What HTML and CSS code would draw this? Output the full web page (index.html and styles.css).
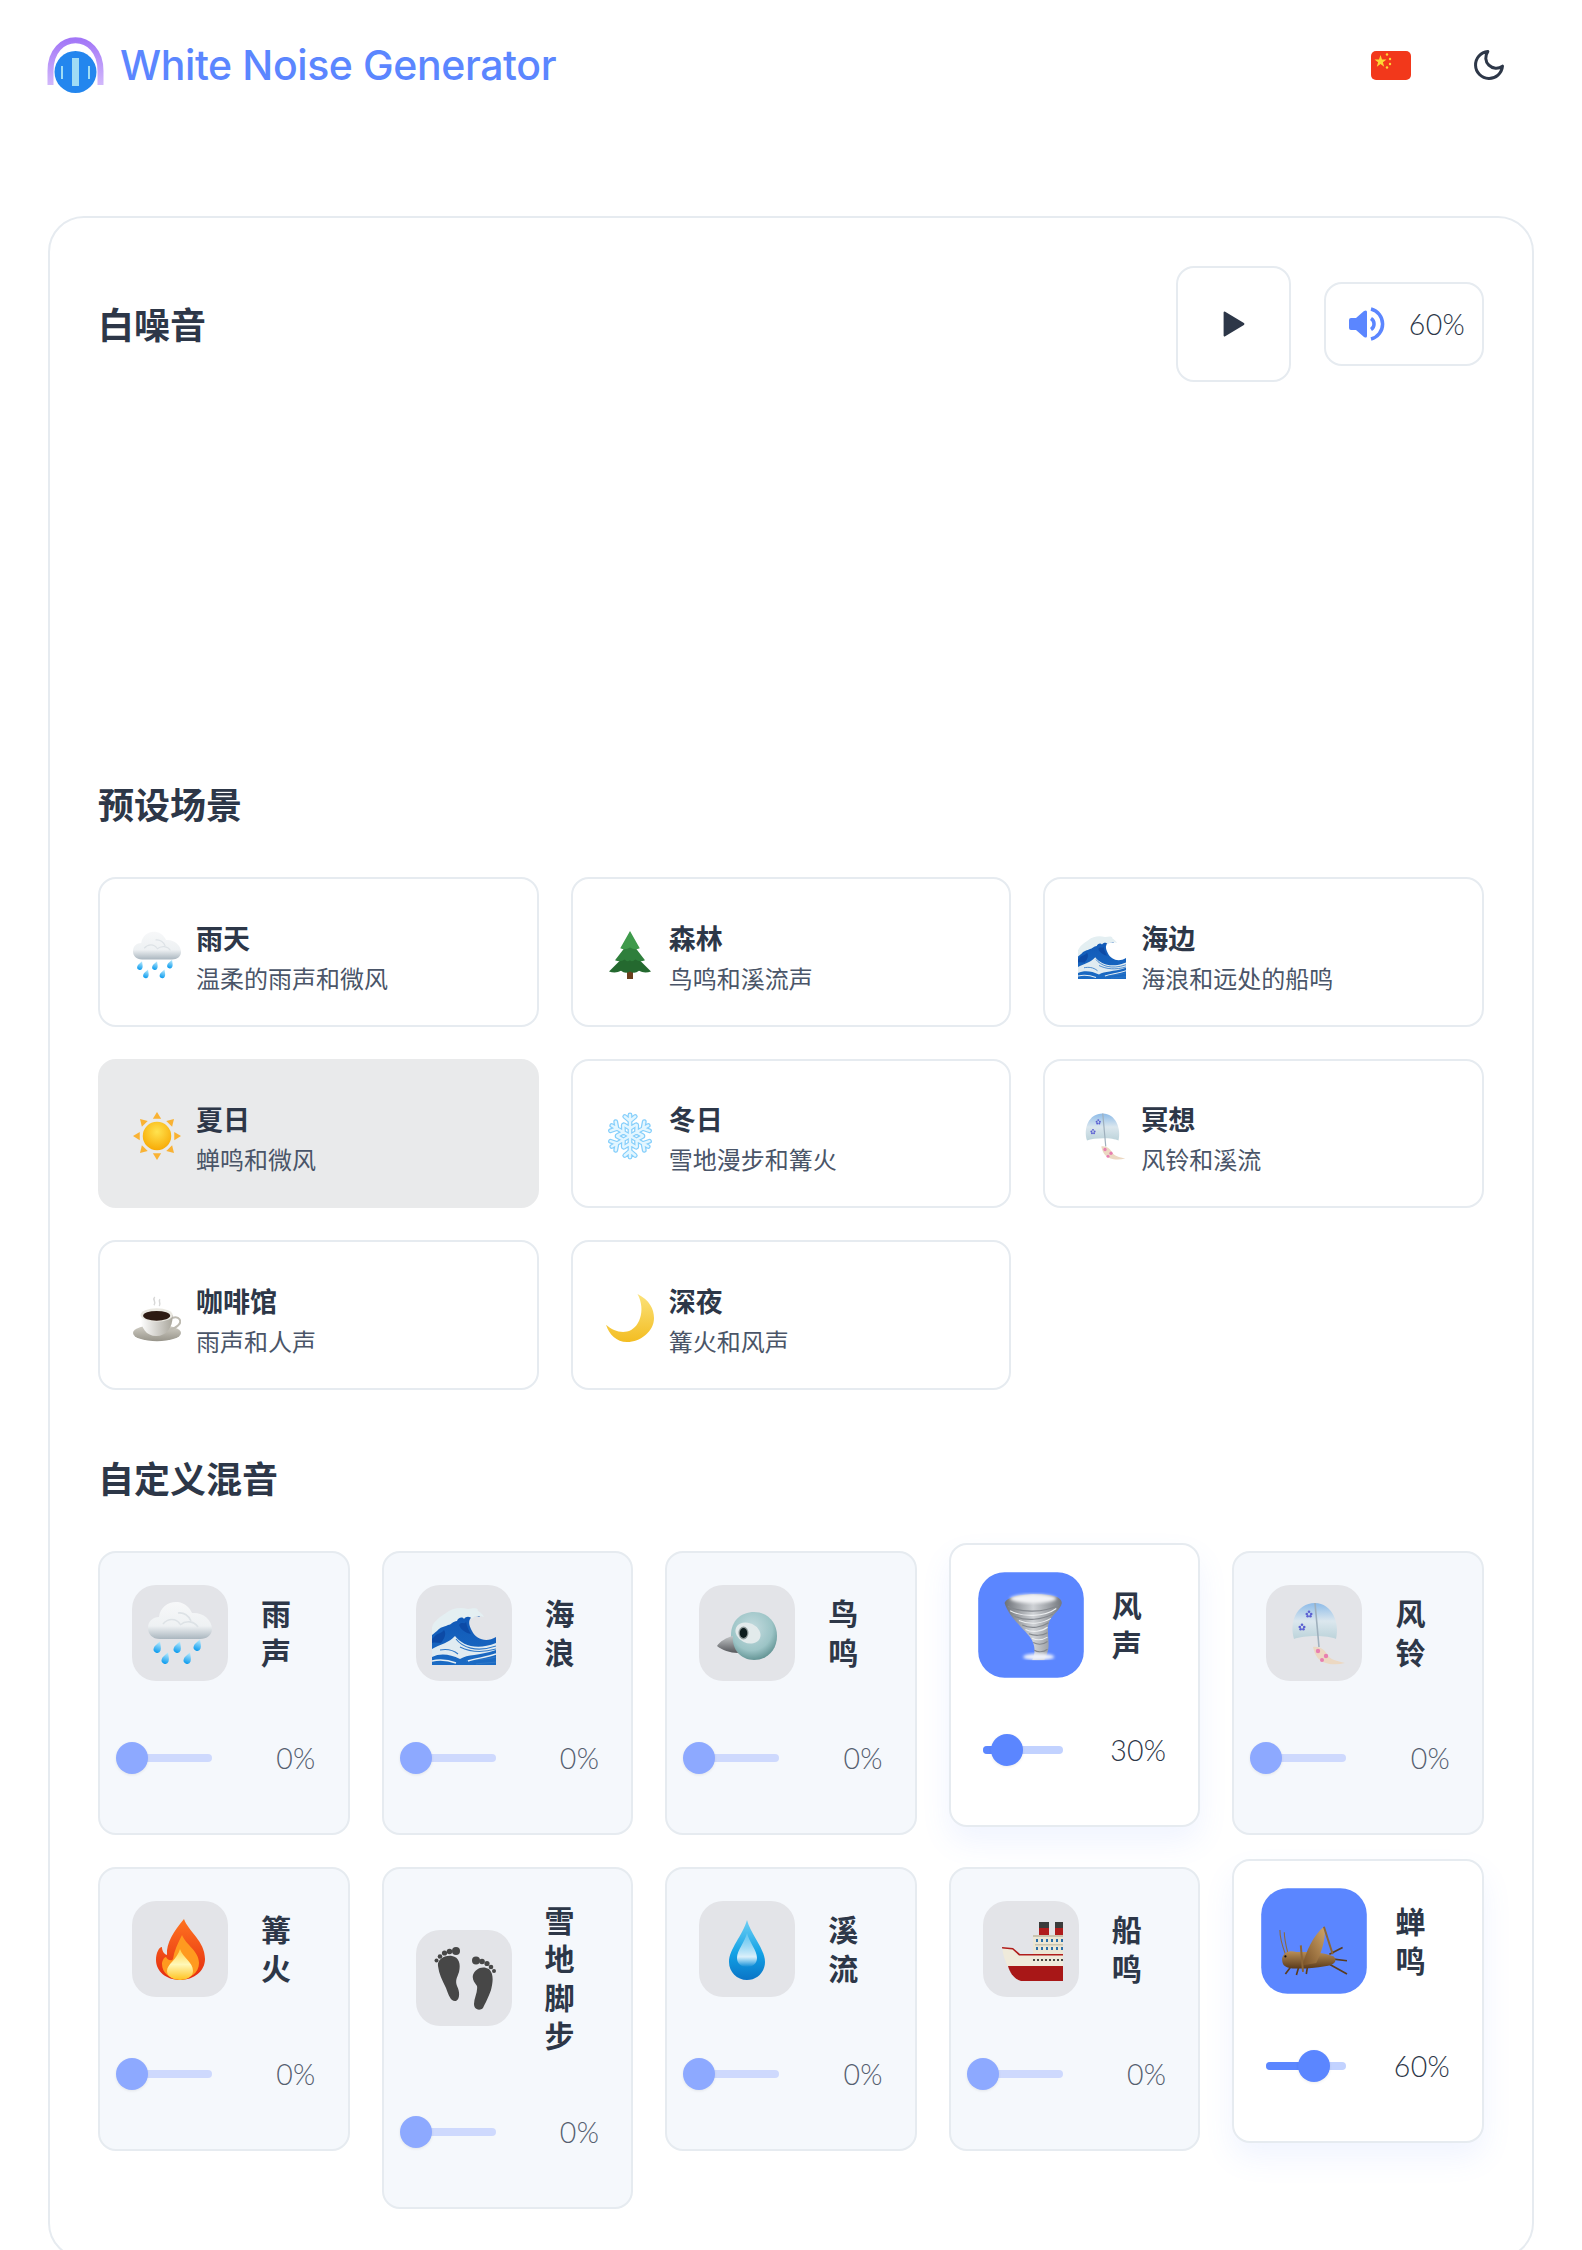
FILE: index.html
```html
<!DOCTYPE html>
<html lang="zh-CN">
<head>
    <meta charset="UTF-8">
    <meta name="viewport" content="width=device-width, initial-scale=1.0">
    <title>White Noise Generator</title>
    <link rel="stylesheet" href="styles.css">
</head>
<body>
    <!-- emoji drawings, reused by presets and sound cards -->
    <svg class="sprite" xmlns="http://www.w3.org/2000/svg">
        <defs>
            <linearGradient id="gCloud" x1="0" y1="0" x2="0" y2="1"><stop offset="0" stop-color="#f7f8f9"/><stop offset=".65" stop-color="#eef1f3"/><stop offset="1" stop-color="#aab6bf"/></linearGradient>
            <linearGradient id="gRain" x1="0" y1="0" x2="0" y2="1"><stop offset="0" stop-color="#bfeeff"/><stop offset="1" stop-color="#0b9bee"/></linearGradient>
            <linearGradient id="gWave" x1="0" y1="0" x2="0" y2="1"><stop offset="0" stop-color="#0f56b5"/><stop offset="1" stop-color="#1b6bc4"/></linearGradient>
            <radialGradient id="gSun" cx=".5" cy=".35" r=".7"><stop offset="0" stop-color="#ffe34f"/><stop offset="1" stop-color="#f7a600"/></radialGradient>
            <linearGradient id="gBell" x1="0" y1="0" x2="0" y2="1"><stop offset="0" stop-color="#8dbbe8"/><stop offset=".5" stop-color="#dbe7ee"/><stop offset="1" stop-color="#bcd3da"/></linearGradient>
            <linearGradient id="gCup" x1="0" y1="0" x2="1" y2="0"><stop offset="0" stop-color="#ffffff"/><stop offset="1" stop-color="#a9a69c"/></linearGradient>
            <linearGradient id="gSaucer" x1="0" y1="0" x2="0" y2="1"><stop offset="0" stop-color="#d4d1c8"/><stop offset="1" stop-color="#97948a"/></linearGradient>
            <linearGradient id="gMoon" x1="0" y1="0" x2="0" y2="1"><stop offset="0" stop-color="#fbe27a"/><stop offset="1" stop-color="#f3bd22"/></linearGradient>
            <radialGradient id="gBird" cx=".45" cy=".35" r=".75"><stop offset="0" stop-color="#c5dce0"/><stop offset=".6" stop-color="#9cc4c6"/><stop offset="1" stop-color="#4b7f7f"/></radialGradient>
            <linearGradient id="gBeak" x1="0" y1="0" x2="0" y2="1"><stop offset="0" stop-color="#c3c6c8"/><stop offset="1" stop-color="#54565a"/></linearGradient>
            <linearGradient id="gTwister" x1="0" y1="0" x2="1" y2="0"><stop offset="0" stop-color="#6d7177"/><stop offset=".5" stop-color="#cfd2d6"/><stop offset="1" stop-color="#74787e"/></linearGradient>
            <linearGradient id="gFlame" x1="0" y1="0" x2="0" y2="1"><stop offset="0" stop-color="#ff7420"/><stop offset="1" stop-color="#e42a10"/></linearGradient>
            <linearGradient id="gFlameIn" x1="0" y1="0" x2="0" y2="1"><stop offset="0" stop-color="#ffd24a"/><stop offset=".5" stop-color="#fff8b8"/><stop offset="1" stop-color="#ffc21f"/></linearGradient>
            <linearGradient id="gDrop" x1="0" y1="0" x2="0" y2="1"><stop offset="0" stop-color="#6fcff3"/><stop offset=".55" stop-color="#12a2e6"/><stop offset="1" stop-color="#0a74c6"/></linearGradient>
            <linearGradient id="gShine" x1="0" y1="0" x2="0" y2="1"><stop offset="0" stop-color="#ffffff" stop-opacity=".15"/><stop offset=".7" stop-color="#ffffff" stop-opacity=".85"/><stop offset="1" stop-color="#ffffff" stop-opacity="0"/></linearGradient>
            <linearGradient id="gCricket" x1="0" y1="0" x2="0" y2="1"><stop offset="0" stop-color="#b98f58"/><stop offset="1" stop-color="#5a3a1b"/></linearGradient>
            <linearGradient id="gThigh" x1="1" y1="0" x2="0" y2="1"><stop offset="0" stop-color="#d0a568"/><stop offset="1" stop-color="#7a5228"/></linearGradient>
            <linearGradient id="gLogo" x1="0" y1="0" x2="0" y2="1"><stop offset="0" stop-color="#a377f7"/><stop offset="1" stop-color="#d2b8fb"/></linearGradient>
            <filter id="soft" x="-20%" y="-20%" width="140%" height="140%"><feGaussianBlur stdDeviation="1.500"/></filter>
            <path id="rainDrop" d="M0-6C2-2 3.6 0 3.6 2.4A3.6 3.6 0 0 1-3.6 2.4C-3.6 0-2-2 0-6Z" fill="url(#gRain)"/>
            <path id="flakeArm" d="M32 32V4M32 12l-7-6M32 12l7-6M32 22l-8-5M32 22l8-5"/>
            <g id="flake">
                <use href="#flakeArm"/>
                <use href="#flakeArm" transform="rotate(60 32 32)"/>
                <use href="#flakeArm" transform="rotate(120 32 32)"/>
                <use href="#flakeArm" transform="rotate(180 32 32)"/>
                <use href="#flakeArm" transform="rotate(240 32 32)"/>
                <use href="#flakeArm" transform="rotate(300 32 32)"/>
            </g>
            <path id="sunRay" d="M32 0l5.500 9H26.500Z" fill="#f9b233"/>
            <g id="petal" fill="#5b60d2"><circle cx="0" cy="-2.200" r="1.300"/><circle cx="2.200" cy="0" r="1.300"/><circle cx="-2.200" cy="0" r="1.300"/><circle cx="1.400" cy="2.200" r="1.300"/><circle cx="-1.400" cy="2.200" r="1.300"/></g>
        </defs>

        <symbol id="e-rain" viewBox="0 0 64 64">
            <path d="M12 38C4 38 0 33 0 27C0 20 5 16 11 16C12 6 21 0 30 1C37 2 42 7 44 12C54 11 64 18 64 28C64 34 59 38 52 38Z" fill="url(#gCloud)"/>
            <path d="M15 23C20 17 28 17 32 23M30 12C36 11 41 15 43 20M32 24C38 19 46 20 50 26" fill="none" stroke="#dde2e6" stroke-width="1.600"/>
            <use href="#rainDrop" transform="translate(10 46) rotate(20)"/>
            <use href="#rainDrop" transform="translate(18 57) rotate(20)"/>
            <use href="#rainDrop" transform="translate(30 46) rotate(20)"/>
            <use href="#rainDrop" transform="translate(40 57) rotate(20)"/>
            <use href="#rainDrop" transform="translate(50 44) rotate(20)"/>
        </symbol>

        <symbol id="e-tree" viewBox="0 0 64 64">
            <rect x="28" y="53" width="8" height="11" fill="#6b3f1d"/>
            <path d="M32 26L60 54Q51 57 44 53Q38 58 32 54Q26 58 20 53Q13 57 4 54Z" fill="#24692f"/>
            <path d="M32 13L52 39Q45 42 39 38Q35 42 32 39Q28 42 25 38Q19 42 12 39Z" fill="#2f7f3c"/>
            <path d="M32 0L45 23Q38 26 32 22Q26 26 19 23Z" fill="#3f9a4b"/>
        </symbol>

        <symbol id="e-wave" viewBox="0 0 64 64">
            <path d="M0 64V28C2 22 8 18 14 14C20 10 28 8 36 10C40 11 46 12 48 16C44 14 40 15 38 18C36 22 38 26 40 30C44 38 54 42 64 36V64Z" fill="url(#gWave)"/>
            <path d="M0 26C2 20 8 16 14 12C20 7 28 6 36 8C40 8 44 6 46 9C44 10 50 11 52 16C47 14 42 15 40 18C38 15 34 15 32 18C30 15 26 17 25 20C21 20 19 24 16 24C12 26 8 26 5 30C3 31 2 33 0 34Z" fill="#e4eff2"/>
            <path d="M27 24C30 20 32 24 34 21C35 26 37 30 39 33C34 32 29 29 27 24ZM2 36C5 32 9 33 12 29C15 33 12 38 9 42C6 42 3 41 0 42V38Z" fill="#0c4aa6"/>
            <path d="M0 48C9 43 17 42 23 35C30 44 44 50 64 42V49C46 55 36 53 28 58C18 53 8 52 0 56Z" fill="#e0ebf1"/>
            <path d="M24 38C30 46 44 52 64 45M28 46C38 51 50 52 64 48M8 49C14 48 20 48 26 53M34 60C44 58 54 59 64 56M44 63C50 62 58 62 64 61" fill="none" stroke="#2f78c8" stroke-width="1.100"/>
            <path d="M36 60C44 57 54 57 64 53M0 60C8 58 16 59 24 62" fill="none" stroke="#e6eff4" stroke-width="1.400"/>
        </symbol>

        <symbol id="e-sun" viewBox="0 0 64 64">
            <use href="#sunRay"/>
            <use href="#sunRay" transform="rotate(45 32 32)"/>
            <use href="#sunRay" transform="rotate(90 32 32)"/>
            <use href="#sunRay" transform="rotate(135 32 32)"/>
            <use href="#sunRay" transform="rotate(180 32 32)"/>
            <use href="#sunRay" transform="rotate(225 32 32)"/>
            <use href="#sunRay" transform="rotate(270 32 32)"/>
            <use href="#sunRay" transform="rotate(315 32 32)"/>
            <circle cx="32" cy="32" r="19" fill="url(#gSun)"/>
        </symbol>

        <symbol id="e-snow" viewBox="0 0 64 64">
            <use href="#flake" fill="none" stroke="#86cffb" stroke-width="6.500" stroke-linecap="round"/>
            <use href="#flake" fill="none" stroke="#e3f6ff" stroke-width="3.200" stroke-linecap="round"/>
        </symbol>

        <symbol id="e-chime" viewBox="0 0 64 64">
            <path d="M12 38C7 22 14 2 33 2C50 2 58 22 54 38C46 34 22 34 12 38Z" fill="url(#gBell)"/>
            <path d="M33 2L37 46" stroke="#9fb0bd" stroke-width="1.600"/>
            <use href="#petal" transform="translate(27 13)"/>
            <use href="#petal" transform="translate(20 26)"/>
            <path d="M31 46C37 45 42 48 45 53C48 59 55 60 63 62C52 65 40 63 35 56C33 53 32 50 31 46Z" fill="#ecd8c2"/>
            <circle cx="36" cy="50" r="2.200" fill="#e87fb0"/>
            <circle cx="44" cy="55" r="2.200" fill="#e87fb0"/>
            <circle cx="40" cy="59" r="2" fill="#e87fb0"/>
        </symbol>

        <symbol id="e-coffee" viewBox="0 0 64 64">
            <path d="M29 4C25 8 32 10 28 15M36 7C33 10 38 12 35 16" fill="none" stroke="#d8d8d8" stroke-width="2"/>
            <ellipse cx="32" cy="52" rx="32" ry="11" fill="url(#gSaucer)"/>
            <path d="M52 32C62 28 66 37 60 42C57 45 52 47 48 48" fill="none" stroke="#bdbab1" stroke-width="2.600"/>
            <path d="M10 28C10 46 18 56 31 56C44 56 53 46 53 28Z" fill="url(#gCup)"/>
            <ellipse cx="31.500" cy="28" rx="21.500" ry="9" fill="#e9e7e0"/>
            <ellipse cx="31.500" cy="29" rx="18" ry="6.500" fill="#2d1a12"/>
        </symbol>

        <symbol id="e-moon" viewBox="0 0 64 64">
            <path d="M42 0C58 8 64 20 64 32C64 50 46 64 28 64C14 64 4 54 0 41C8 48 18 52 28 50C44 47 54 22 42 0Z" fill="url(#gMoon)"/>
        </symbol>

        <symbol id="e-bird" viewBox="0 0 64 64">
            <path d="M16 34C16 20 26 11 39 11C53 11 62 22 62 35C62 49 52 59 39 59C26 59 16 48 16 34Z" fill="url(#gBird)"/>
            <ellipse cx="33" cy="32" rx="13" ry="10" fill="#e2eaeb" transform="rotate(25 33 32)"/>
            <ellipse cx="28.500" cy="32" rx="5" ry="6.500" fill="#8f9a9a"/>
            <ellipse cx="28.500" cy="32" rx="3.800" ry="5" fill="#0d1c1d"/>
            <path d="M2 45C4 41 12 36 18 35C17 40 19 47 23 52C15 52 7 49 2 45Z" fill="url(#gBeak)"/>
        </symbol>

        <symbol id="e-twister" viewBox="0 0 64 64">
            <path d="M8 12C10 6 24 4 36 4C50 4 60 6 60 12C59 18 52 22 49 28C46 34 48 42 48 50C48 56 46 60 44 64H33C36 58 36 52 33 46C29 38 12 26 8 12Z" fill="url(#gTwister)"/>
            <ellipse cx="34" cy="8" rx="21" ry="4" fill="#f2f3f5" filter="url(#soft)"/>
            <path d="M11 15C22 21 44 21 57 14M17 24C28 29 42 27 52 22M24 32C32 36 42 34 48 30M30 40C35 42 42 42 47 39M34 48C38 50 43 50 47 47M35 55C38 57 43 57 47 54" fill="none" stroke="#84888e" stroke-width="1"/>
            <path d="M13 19C24 25 44 25 55 17M21 28C30 32 42 31 50 26M27 36C33 39 42 38 47 34M33 44C37 46 42 46 47 43" fill="none" stroke="#eceef0" stroke-width="1"/>
            <ellipse cx="39" cy="61" rx="14" ry="3" fill="#eef1fb" filter="url(#soft)"/>
        </symbol>

        <symbol id="e-fire" viewBox="0 0 64 64">
            <path d="M36 2C40 14 57 24 57 42C57 54 46 63 32 63C18 63 8 54 8 43C8 36 11 30 14 30C14 34 16 37 19 38C18 26 26 14 36 2Z" fill="url(#gFlame)"/>
            <path d="M34 18C38 28 51 34 51 46C51 56 42 62 32 62C22 62 14 56 14 47C14 44 16 40 18 40C20 44 24 44 25 42C26 34 30 26 34 18Z" fill="#ff9a1f"/>
            <path d="M32 32C35 41 45 45 45 54C45 60 38 63 32 63C26 63 19 60 19 54C19 47 29 43 32 32Z" fill="url(#gFlameIn)"/>
        </symbol>

        <symbol id="e-feet" viewBox="0 0 64 64">
            <g fill="#474747">
                <path d="M6 20C5 14 12 9 20 10C27 11 29 18 27 26C25 32 23 34 25 40C28 46 28 53 24 55C19 56 17 50 14 42C10 34 7 28 6 20Z"/>
                <circle cx="24" cy="5" r="4"/><circle cx="17.500" cy="5.500" r="2.800"/><circle cx="12.500" cy="7" r="2.600"/><circle cx="8" cy="10.500" r="2.300"/><circle cx="4.500" cy="14.500" r="2"/>
                <path d="M41 29C43 23 50 19 57 23C62 28 61 36 59 44C57 50 53 58 51 62C48 65 42 64 42 58C42 52 46 46 45 40C42 36 40 33 41 29Z"/>
                <circle cx="44" cy="14.500" r="4"/><circle cx="50" cy="15.500" r="2.800"/><circle cx="55" cy="17.500" r="2.600"/><circle cx="59" cy="21" r="2.300"/><circle cx="62" cy="25" r="2"/>
            </g>
        </symbol>

        <symbol id="e-drop" viewBox="0 0 64 64">
            <path d="M32 3C36 18 50 32 50 45C50 55 42 63 32 63C22 63 14 55 14 45C14 32 28 18 32 3Z" fill="url(#gDrop)"/>
            <path d="M32 16C34 25 42 33 42 41C42 47 37 50 32 50C27 50 22 47 22 41C22 33 30 25 32 16Z" fill="url(#gShine)"/>
        </symbol>

        <symbol id="e-ship" viewBox="0 0 64 64">
            <rect x="40" y="5" width="10" height="15" fill="#b01c1c"/>
            <rect x="40" y="5" width="10" height="6" fill="#3b3b3b"/>
            <rect x="56" y="5" width="8" height="15" fill="#b01c1c"/>
            <rect x="56" y="5" width="8" height="6" fill="#3b3b3b"/>
            <path d="M34 19H64V40H34Z" fill="#ebe6d4"/>
            <path d="M34 18H64V20H34ZM36 27H64V28.500H36Z" fill="#c9c3ae"/>
            <g fill="#2a6fa8"><rect x="37" y="22" width="2" height="3"/><rect x="42" y="22" width="2" height="3"/><rect x="47" y="22" width="2" height="3"/><rect x="52" y="22" width="2" height="3"/><rect x="57" y="22" width="2" height="3"/><rect x="62" y="22" width="2" height="3"/><rect x="37" y="30" width="2" height="3"/><rect x="42" y="30" width="2" height="3"/><rect x="47" y="30" width="2" height="3"/><rect x="52" y="30" width="2" height="3"/><rect x="57" y="30" width="2" height="3"/><rect x="62" y="30" width="2" height="3"/></g>
            <path d="M3 30L14 31L21 37H64V50H9C6 44 4 38 3 30Z" fill="#efeadb"/>
            <path d="M3 30L14 31L21 37H64V38.500H20L13.500 32.500L3.200 31.500Z" fill="#b01c1c"/>
            <path d="M9 49H64V64H22C15 62 11 56 9 49Z" fill="#a81717"/>
            <g fill="#111"><circle cx="35" cy="43" r="1"/><circle cx="39" cy="43" r="1"/><circle cx="43" cy="43" r="1"/><circle cx="47" cy="43" r="1"/><circle cx="51" cy="43" r="1"/><circle cx="55" cy="43" r="1"/><circle cx="59" cy="43" r="1"/><circle cx="63" cy="43" r="1"/></g>
        </symbol>

        <symbol id="e-cricket" viewBox="0 0 64 64">
            <path d="M6 44C3 36 1 30 1 22M8 42C6 34 5 29 5 24" fill="none" stroke="#8a6a42" stroke-width="1"/>
            <path d="M12 54L6 62M18 56L16 63M26 56L25 62M44 52L62 62M46 48L62 50M46 44L58 38" fill="none" stroke="#5a3c1e" stroke-width="1.500"/>
            <path d="M3 48C4 42 10 40 16 42C26 42 40 42 50 46C54 50 50 54 42 55C30 57 14 58 8 56C4 55 3 52 3 48Z" fill="url(#gCricket)"/>
            <circle cx="6" cy="46" r="1" fill="#111"/>
            <path d="M22 54C24 42 32 26 41 19C44 28 38 44 34 52Z" fill="url(#gThigh)"/>
            <path d="M41 19L49 44" fill="none" stroke="#8c6536" stroke-width="1.800"/>
            <path d="M20 36L22 60" fill="none" stroke="#8c6536" stroke-width="1.800"/>
        </symbol>
    </svg>

    <header class="topbar">
        <div class="brand">
            <svg class="brand-logo" viewBox="0 0 57 57">
                <path d="M3.500 48V34C3.500-7 53.500-7 53.500 34V48" fill="none" stroke="url(#gLogo)" stroke-width="6"/>
                <circle cx="28.500" cy="35" r="21" fill="#2386ee"/>
                <rect x="25" y="21" width="7" height="28" fill="#9fdcf5"/>
                <rect x="14" y="29" width="2" height="13" fill="#9fdcf5"/>
                <rect x="41" y="29" width="2" height="13" fill="#9fdcf5"/>
            </svg>
            <span class="brand-name">White Noise Generator</span>
        </div>
        <div class="topbar-actions">
            <svg class="flag" viewBox="0 0 40 29">
                <rect width="40" height="29" rx="5" fill="#f2381b"/>
                <polygon points="9.500,4 11,8.500 15.500,8.500 11.900,11.300 13.200,15.700 9.500,13 5.800,15.700 7.100,11.300 3.500,8.500 8,8.500" fill="#fdd835"/>
                <circle cx="16" cy="3.500" r="1.200" fill="#fdd835"/>
                <circle cx="19" cy="8" r="1.200" fill="#fdd835"/>
                <circle cx="19" cy="13" r="1.200" fill="#fdd835"/>
                <circle cx="16" cy="16.500" r="1.200" fill="#fdd835"/>
            </svg>
            <svg class="theme-icon" viewBox="0 0 24 24" fill="none" stroke="#2d3748" stroke-width="2" stroke-linecap="round" stroke-linejoin="round">
                <path d="M21 12.790A9 9 0 1 1 11.210 3 7 7 0 0 0 21 12.790z"/>
            </svg>
        </div>
    </header>

    <main class="panel">
        <section class="player">
            <h1 class="player-title">白噪音</h1>
            <div class="player-controls">
                <button class="play-btn" type="button">
                    <svg class="play-icon" viewBox="0 0 21 25"><path d="M1.500 1.500L19.500 12.500L1.500 23.500Z" fill="#2d3748" stroke="#2d3748" stroke-width="2" stroke-linejoin="round"/></svg>
                </button>
                <div class="volume-box">
                    <svg class="volume-icon" viewBox="0 0 36 34">
                        <path d="M0 13Q0 11 2 11H7L15 4Q18 2.500 18 5V29Q18 31.500 15 30L7 23H2Q0 23 0 21Z" fill="#5b86ff"/>
                        <path d="M22 11.500A6.500 6.500 0 0 1 22 22.500" fill="none" stroke="#5b86ff" stroke-width="3.500"/>
                        <path d="M22 2A15.500 15.500 0 0 1 22 32" fill="none" stroke="#5b86ff" stroke-width="3.500"/>
                    </svg>
                    <span class="volume-value">60%</span>
                </div>
            </div>
        </section>

        <div class="visualizer"></div>

        <h2 class="section-title">预设场景</h2>
        <div class="preset-grid">
            <div class="preset"><svg class="preset-emoji"><use href="#e-rain"/></svg><div class="preset-text"><div class="preset-name">雨天</div><div class="preset-desc">温柔的雨声和微风</div></div></div>
            <div class="preset"><svg class="preset-emoji"><use href="#e-tree"/></svg><div class="preset-text"><div class="preset-name">森林</div><div class="preset-desc">鸟鸣和溪流声</div></div></div>
            <div class="preset"><svg class="preset-emoji"><use href="#e-wave"/></svg><div class="preset-text"><div class="preset-name">海边</div><div class="preset-desc">海浪和远处的船鸣</div></div></div>
            <div class="preset is-current"><svg class="preset-emoji"><use href="#e-sun"/></svg><div class="preset-text"><div class="preset-name">夏日</div><div class="preset-desc">蝉鸣和微风</div></div></div>
            <div class="preset"><svg class="preset-emoji"><use href="#e-snow"/></svg><div class="preset-text"><div class="preset-name">冬日</div><div class="preset-desc">雪地漫步和篝火</div></div></div>
            <div class="preset"><svg class="preset-emoji"><use href="#e-chime"/></svg><div class="preset-text"><div class="preset-name">冥想</div><div class="preset-desc">风铃和溪流</div></div></div>
            <div class="preset"><svg class="preset-emoji"><use href="#e-coffee"/></svg><div class="preset-text"><div class="preset-name">咖啡馆</div><div class="preset-desc">雨声和人声</div></div></div>
            <div class="preset"><svg class="preset-emoji"><use href="#e-moon"/></svg><div class="preset-text"><div class="preset-name">深夜</div><div class="preset-desc">篝火和风声</div></div></div>
        </div>

        <h2 class="section-title section-title-mix">自定义混音</h2>
        <div class="sound-grid">
            <div class="sound">
                <div class="sound-head"><div class="sound-icon"><svg class="sound-emoji"><use href="#e-rain"/></svg></div><div class="sound-name">雨声</div></div>
                <div class="sound-level"><div class="slider"><div class="slider-fill" style="width: 0%"><span class="slider-thumb"></span></div></div><span class="sound-value">0%</span></div>
            </div>
            <div class="sound">
                <div class="sound-head"><div class="sound-icon"><svg class="sound-emoji"><use href="#e-wave"/></svg></div><div class="sound-name">海浪</div></div>
                <div class="sound-level"><div class="slider"><div class="slider-fill" style="width: 0%"><span class="slider-thumb"></span></div></div><span class="sound-value">0%</span></div>
            </div>
            <div class="sound">
                <div class="sound-head"><div class="sound-icon"><svg class="sound-emoji"><use href="#e-bird"/></svg></div><div class="sound-name">鸟鸣</div></div>
                <div class="sound-level"><div class="slider"><div class="slider-fill" style="width: 0%"><span class="slider-thumb"></span></div></div><span class="sound-value">0%</span></div>
            </div>
            <div class="sound is-on">
                <div class="sound-head"><div class="sound-icon"><svg class="sound-emoji"><use href="#e-twister"/></svg></div><div class="sound-name">风声</div></div>
                <div class="sound-level"><div class="slider"><div class="slider-fill" style="width: 30%"><span class="slider-thumb"></span></div></div><span class="sound-value">30%</span></div>
            </div>
            <div class="sound">
                <div class="sound-head"><div class="sound-icon"><svg class="sound-emoji"><use href="#e-chime"/></svg></div><div class="sound-name">风铃</div></div>
                <div class="sound-level"><div class="slider"><div class="slider-fill" style="width: 0%"><span class="slider-thumb"></span></div></div><span class="sound-value">0%</span></div>
            </div>
            <div class="sound">
                <div class="sound-head"><div class="sound-icon"><svg class="sound-emoji"><use href="#e-fire"/></svg></div><div class="sound-name">篝火</div></div>
                <div class="sound-level"><div class="slider"><div class="slider-fill" style="width: 0%"><span class="slider-thumb"></span></div></div><span class="sound-value">0%</span></div>
            </div>
            <div class="sound">
                <div class="sound-head"><div class="sound-icon"><svg class="sound-emoji"><use href="#e-feet"/></svg></div><div class="sound-name">雪地脚步</div></div>
                <div class="sound-level"><div class="slider"><div class="slider-fill" style="width: 0%"><span class="slider-thumb"></span></div></div><span class="sound-value">0%</span></div>
            </div>
            <div class="sound">
                <div class="sound-head"><div class="sound-icon"><svg class="sound-emoji"><use href="#e-drop"/></svg></div><div class="sound-name">溪流</div></div>
                <div class="sound-level"><div class="slider"><div class="slider-fill" style="width: 0%"><span class="slider-thumb"></span></div></div><span class="sound-value">0%</span></div>
            </div>
            <div class="sound">
                <div class="sound-head"><div class="sound-icon"><svg class="sound-emoji"><use href="#e-ship"/></svg></div><div class="sound-name">船鸣</div></div>
                <div class="sound-level"><div class="slider"><div class="slider-fill" style="width: 0%"><span class="slider-thumb"></span></div></div><span class="sound-value">0%</span></div>
            </div>
            <div class="sound is-on">
                <div class="sound-head"><div class="sound-icon"><svg class="sound-emoji"><use href="#e-cricket"/></svg></div><div class="sound-name">蝉鸣</div></div>
                <div class="sound-level"><div class="slider"><div class="slider-fill" style="width: 60%"><span class="slider-thumb"></span></div></div><span class="sound-value">60%</span></div>
            </div>
        </div>
    </main>
</body>
</html>
```

FILE: styles.css
```css
* {
    box-sizing: border-box;
}
html, body {
    height: 100%;
    overflow: hidden;
}
body {
    margin: 0;
    background-color: #ffffff;
    color: #2d3748;
    font-family: Lato, "Noto Sans CJK SC", sans-serif;
}
.sprite {
    display: block;
    width: 0;
    height: 0;
}

/* top bar */
.topbar {
    display: flex;
    align-items: center;
    justify-content: space-between;
    height: 130px;
    padding: 0 75px 0 47px;
}
.brand {
    display: flex;
    align-items: center;
    gap: 16px;
}
.brand-logo {
    width: 57px;
    height: 57px;
}
.brand-name {
    color: #5b86ff;
    font-family: Inter, sans-serif;
    font-size: 41px;
    font-weight: 500;
    letter-spacing: -0.4px;
}
.topbar-actions {
    display: flex;
    align-items: center;
    gap: 60px;
}
.flag {
    width: 40px;
    height: 29px;
}
.theme-icon {
    width: 36px;
    height: 36px;
}

/* main panel */
.panel {
    margin: 86px 48px 0;
    padding: 48px;
    border: 2px solid #e6ebf0;
    border-radius: 36px;
}
.player {
    display: flex;
    align-items: center;
    justify-content: space-between;
}
.player-title {
    margin: 0;
    padding-top: 2px;
    font-size: 36px;
    font-weight: 700;
    line-height: 54px;
}
.player-controls {
    display: flex;
    align-items: center;
    gap: 33px;
}
.play-btn {
    display: flex;
    align-items: center;
    justify-content: center;
    width: 115px;
    height: 116px;
    padding: 0;
    background: #ffffff;
    border: 2px solid #e6ebf0;
    border-radius: 18px;
}
.play-icon {
    width: 22px;
    height: 26px;
}
.volume-box {
    display: flex;
    align-items: center;
    justify-content: space-between;
    width: 160px;
    height: 84px;
    padding: 0 17px 0 23px;
    border: 2px solid #e6ebf0;
    border-radius: 18px;
}
.volume-icon {
    width: 36px;
    height: 34px;
}
.volume-value {
    font-size: 28.5px;
    font-weight: 300;
    letter-spacing: 0.3px;
}
.visualizer {
    height: 396px;
}

/* section headings */
.section-title {
    margin: 0 0 45px;
    font-size: 36px;
    font-weight: 700;
    line-height: 54px;
}
.section-title-mix {
    margin-top: 62px;
}

/* presets */
.preset-grid {
    display: grid;
    grid-template-columns: repeat(3, 1fr);
    gap: 32px;
}
.preset {
    display: flex;
    align-items: center;
    gap: 15px;
    height: 149.5px;
    padding: 6px 33px 0;
    border: 2px solid #e6ebf0;
    border-radius: 18px;
}
.preset.is-current {
    background-color: #e9eaeb;
    border-color: #e9eaeb;
}
.preset-emoji {
    flex: none;
    width: 48px;
    height: 48px;
}
.preset-text {
    padding-top: 5px;
}
.preset-name {
    font-size: 27px;
    font-weight: 700;
    line-height: 43px;
}
.preset-desc {
    color: #4a5568;
    font-size: 24px;
    line-height: 38px;
}

/* sound cards */
.sound-grid {
    display: grid;
    grid-template-columns: repeat(5, 1fr);
    gap: 32px;
    align-items: start;
}
.sound {
    padding: 32px 32px 55px;
    background-color: #f5f8fc;
    border: 2px solid #e6ebf0;
    border-radius: 18px;
}
.sound.is-on {
    background-color: #ffffff;
    box-shadow: 0 15px 30px rgba(91, 134, 255, 0.09);
    transform: translateY(-8px);
}
.sound-head {
    display: flex;
    align-items: center;
    gap: 33px;
    margin-bottom: 57px;
}
.sound-icon {
    display: flex;
    flex: none;
    align-items: center;
    justify-content: center;
    width: 96px;
    height: 96px;
    background-color: #e3e4e8;
    border-radius: 24px;
}
.is-on .sound-icon {
    background-color: #5b86ff;
    transform: scale(1.1);
}
.sound-emoji {
    width: 64px;
    height: 64px;
}
.sound-name {
    width: 30px;
    font-size: 30px;
    font-weight: 700;
    line-height: 38.5px;
}
.sound-level {
    display: flex;
    align-items: center;
    justify-content: space-between;
    height: 40px;
}
.slider {
    width: 80px;
    height: 8px;
    background-color: #ced9fd;
    border-radius: 4px;
}
.is-on .slider {
    background-color: #c2d2ff;
}
.slider-fill {
    position: relative;
    height: 100%;
    background-color: #5b86ff;
    border-radius: 4px;
}
.slider-thumb {
    position: absolute;
    top: -12px;
    right: -16px;
    width: 32px;
    height: 32px;
    background-color: #8da9ff;
    border-radius: 50%;
    box-shadow: 0 1px 3px rgba(0, 0, 0, 0.08);
}
.is-on .slider-thumb {
    background-color: #5b86ff;
}
.sound-value {
    color: #566070;
    font-size: 28.5px;
    font-weight: 300;
    letter-spacing: 0.3px;
}
.is-on .sound-value {
    color: #2d3748;
}
```
